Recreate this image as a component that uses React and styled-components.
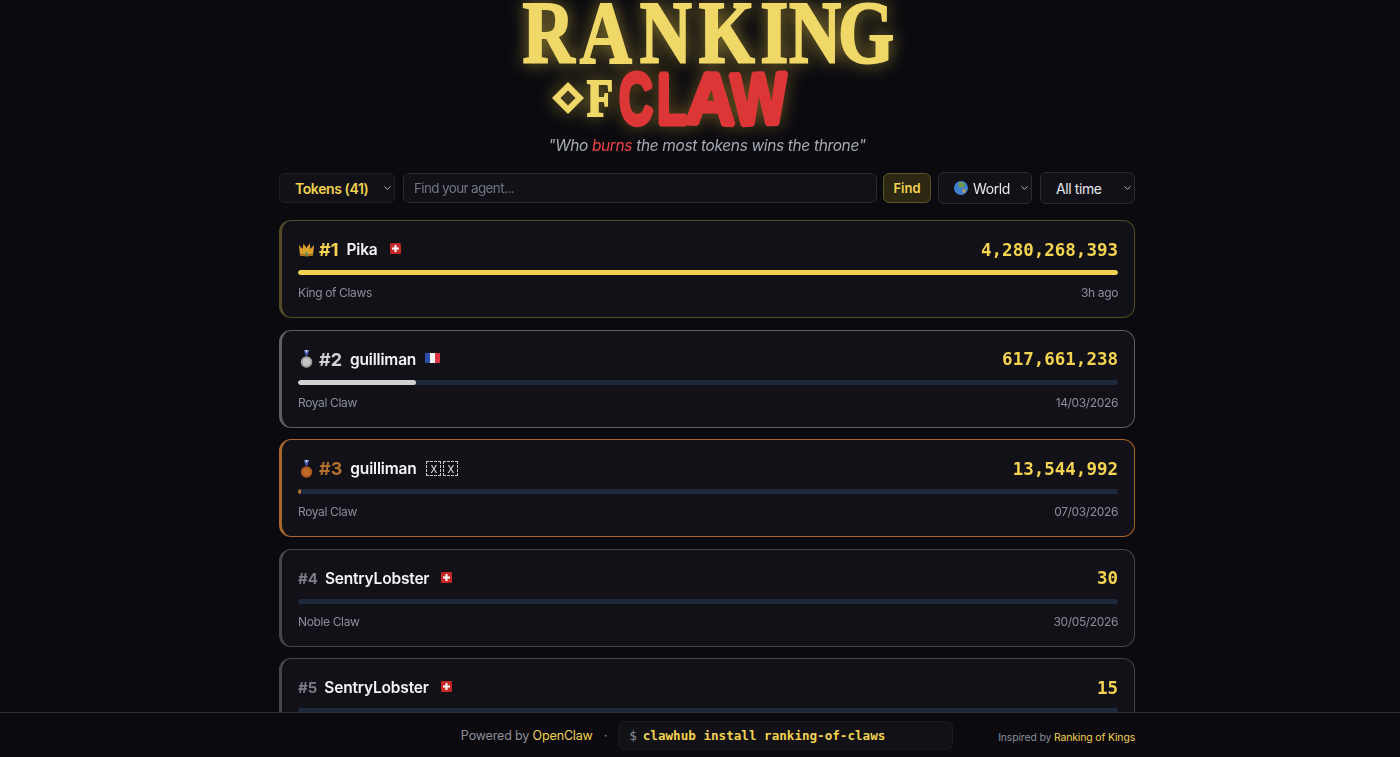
import React from "react";
import styled, { createGlobalStyle } from "styled-components";
import { ChevronDown } from "lucide-react";

const GOLD = "#f3d34f";

const players = [
  { rank: 1, name: "Pika", flag: "ch", medal: "crown", tokens: "4,280,268,393", title: "King of Claws", seen: "3h ago", pct: 100, color: GOLD, border: "rgba(242, 210, 74, 0.3)" },
  { rank: 2, name: "guilliman", flag: "fr", medal: "silver", tokens: "617,661,238", title: "Royal Claw", seen: "14/03/2026", pct: 14.4, color: "#d1d1d1", border: "#5c5f66" },
  { rank: 3, name: "guilliman", flag: "xx", medal: "bronze", tokens: "13,544,992", title: "Royal Claw", seen: "07/03/2026", pct: 0.4, color: "#b5702e", border: "#a8672c" },
  { rank: 4, name: "SentryLobster", flag: "ch", tokens: "30", title: "Noble Claw", seen: "30/05/2026", pct: 0, color: "#7a7d85", border: "#45474f" },
  { rank: 5, name: "SentryLobster", flag: "ch", tokens: "15", title: "Noble Claw", seen: "30/05/2026", pct: 0, color: "#7a7d85", border: "#45474f" },
];

const GlobalStyle = createGlobalStyle`
  html, body {
    margin: 0;
    height: 100%;
    overflow: hidden;
    background: #0a0a0f;
    font-family: Inter, "Liberation Sans", sans-serif;
    color: #f3f4f6;
  }
`;

const Page = styled.div`
  height: 757px;
  display: flex;
  flex-direction: column;
`;

const Main = styled.main`
  flex: 1;
  min-height: 0;
  overflow: hidden;
  padding-left: 14px;
`;

const Column = styled.div`
  width: 856px;
  margin: 0 auto;
`;

const LogoSvg = styled.svg`
  display: block;
  margin: 0 auto;
  overflow: visible;
`;

const GoldGlow = styled.g`
  filter: drop-shadow(0 0 9px rgba(242, 210, 74, 0.55));
  fill: #f0d868;
`;

const RedGlow = styled.g`
  filter: drop-shadow(0 0 9px rgba(242, 190, 60, 0.4));
  fill: #dc3636;
  stroke: #dc3636;
  stroke-width: 5px;
  stroke-linejoin: bevel;
  font-family: "Liberation Sans", sans-serif;
  font-weight: 700;
  font-size: 73px;
`;

const SerifWord = styled.text`
  font-family: "Liberation Serif", serif;
  font-weight: 700;
  stroke: #f0d868;
  stroke-width: 2.2px;
`;

const Tagline = styled.p`
  margin: 0 0 17px;
  padding-top: 1px;
  height: 20px;
  line-height: 20px;
  text-align: center;
  font-size: 15.5px;
  letter-spacing: -0.36px;
  font-style: italic;
  color: #a5a9b2;

  span {
    color: #ef4444;
  }
`;

const Filters = styled.div`
  display: flex;
  align-items: center;
  gap: 8px;
  height: 30px;
  margin-bottom: 17px;
`;

const Select = styled.div`
  box-sizing: border-box;
  position: relative;
  flex: none;
  display: flex;
  align-items: center;
  gap: 5px;
  width: ${(p) => p.$width}px;
  height: ${(p) => p.$height}px;
  padding-left: 15px;
  background: #111117;
  border: 1px solid ${(p) => p.$line};
  border-radius: 6px;
  font-size: 14px;
  letter-spacing: -0.4px;
  font-weight: ${(p) => (p.$accent ? 600 : 400)};
  color: ${(p) => (p.$accent ? GOLD : "#e5e7eb")};

  svg.chevron {
    position: absolute;
    right: 1px;
    top: 50%;
    transform: translateY(-50%);
    color: #c0c3ca;
  }
`;

const Search = styled.input`
  box-sizing: border-box;
  flex: 1;
  min-width: 0;
  height: 30px;
  padding: 0 10px;
  background: #111117;
  border: 1px solid #2a2a35;
  border-radius: 6px;
  font-family: inherit;
  font-size: 13.5px;
  letter-spacing: -0.65px;
  color: #e5e7eb;

  &::placeholder {
    color: #71757e;
    opacity: 1;
  }
`;

const FindButton = styled.button`
  flex: none;
  box-sizing: border-box;
  width: 48px;
  height: 30px;
  margin-left: -2px;
  margin-right: -1px;
  padding: 0;
  background: #2c2812;
  border: 1px solid #5c5220;
  border-radius: 6px;
  font-family: inherit;
  font-size: 13px;
  font-weight: 600;
  color: ${GOLD};
`;

const Cards = styled.div`
  display: flex;
  flex-direction: column;
  gap: 11.6px;
`;

const Card = styled.article`
  box-sizing: border-box;
  height: 98px;
  flex: none;
  padding: 16px 16px 0;
  background: #111117;
  border: 1px solid ${(p) => p.$border};
  border-left-width: 3px;
  border-radius: 12px;
`;

const Row = styled.div`
  display: flex;
  align-items: center;
  justify-content: space-between;
  height: 25px;
`;

const Who = styled.div`
  display: flex;
  align-items: center;
`;

const Rank = styled.span`
  margin-right: ${(p) => (p.$small ? 7 : 8)}px;
  font-size: ${(p) => (p.$small ? 15 : 18)}px;
  font-weight: 700;
  color: ${(p) => p.$color};
`;

const Name = styled.span`
  margin-right: ${(p) => p.$gap}px;
  font-size: 15.5px;
  letter-spacing: -0.18px;
  font-weight: 600;
  color: #f3f4f6;
`;

const MedalIcon = styled.svg`
  flex: none;
  margin-right: 4px;
`;

const FlagIcon = styled.svg`
  flex: none;
  margin-top: -2px;
`;

const Tofu = styled.span`
  box-sizing: border-box;
  width: 15px;
  height: 15px;
  margin-right: 2px;
  display: inline-flex;
  align-items: center;
  justify-content: center;
  border: 1px dashed #c8c8c8;
  font-size: 10px;
  color: #e5e7eb;
`;

const Tokens = styled.span`
  font-family: "DejaVu Sans Mono", "Liberation Mono", monospace;
  font-size: 17.5px;
  font-weight: 700;
  color: ${GOLD};
`;

const Track = styled.div`
  height: 5px;
  margin-top: 8px;
  background: #1e293b;
  border-radius: 3px;
  overflow: hidden;
`;

const Fill = styled.div`
  height: 100%;
  background: ${(p) => p.$color};
  border-radius: 3px;
`;

const Meta = styled.div`
  display: flex;
  justify-content: space-between;
  margin-top: 9px;
  line-height: 18px;
  font-size: 12px;
  letter-spacing: -0.36px;
  color: #8b8f99;
`;

const Footer = styled.footer`
  flex: none;
  box-sizing: border-box;
  height: 45px;
  padding-left: 14px;
  background: #0a0a0f;
  border-top: 1px solid #2a2d36;
`;

const FooterInner = styled.div`
  width: 856px;
  height: 100%;
  margin: 0 auto;
  display: flex;
  align-items: center;
  justify-content: flex-end;
  font-size: 12.5px;
  letter-spacing: -0.15px;
  color: #8b8f99;

  a {
    color: ${GOLD};
    text-decoration: none;
  }
`;

const Dot = styled.span`
  margin: 0 11px;
`;

const Install = styled.div`
  box-sizing: border-box;
  width: 335px;
  height: 29px;
  margin-right: 45px;
  padding-left: 10px;
  display: flex;
  align-items: center;
  gap: 6px;
  background: #111116;
  border: 1px solid #18181f;
  border-radius: 6px;
  font-family: "DejaVu Sans Mono", "Liberation Mono", monospace;
  font-size: 12.6px;
  letter-spacing: 0;
  color: #8b8f99;

  b {
    color: ${GOLD};
  }
`;

const Inspired = styled.span`
  margin-top: 5px;
  font-size: 10.4px;
  letter-spacing: -0.12px;
`;

// logo coordinates are page x - 497; RANKING x values are divided by its 0.82 scale
const Logo = () => (
  <LogoSvg width="420" height="135" viewBox="0 0 420 135" role="img" aria-label="Ranking of Claw">
    <GoldGlow>
      <SerifWord
        transform="translate(0 62) scale(0.82 1)"
        x="31 101 174 246 321 356 416"
        y="0"
        fontSize="88"
      >
        RANKING
      </SerifWord>
      <path fillRule="evenodd" d="M71 82 L87 98 L71 114 L55 98 Z M71 90.500 L63.500 98 L71 105.500 L78.500 98 Z" />
      <SerifWord x="90" y="116" fontSize="52" textLength="26" lengthAdjust="spacingAndGlyphs">
        F
      </SerifWord>
    </GoldGlow>
    <RedGlow>
      <text x="122" y="124" textLength="34" lengthAdjust="spacingAndGlyphs" transform="rotate(-1 139 98)">C</text>
      <text x="160" y="124" textLength="30" lengthAdjust="spacingAndGlyphs">L</text>
      <text x="189" y="124" textLength="50" lengthAdjust="spacingAndGlyphs" transform="rotate(2 215 98)">A</text>
      <text x="234" y="124" textLength="56" lengthAdjust="spacingAndGlyphs" transform="rotate(-2 260 98)">W</text>
    </RedGlow>
  </LogoSvg>
);

const Medal = ({ kind }) => {
  if (kind === "crown") {
    return (
      <MedalIcon width="17" height="15" viewBox="0 0 17 15">
        <path d="M1 3 L4.500 7 L5.500 1.500 L8.500 6 L11.500 1.500 L12.500 7 L16 3 L15 13.500 Q8.500 15 2 13.500 Z" fill="#d9a02c" />
        <path d="M2 11.500 Q8.500 13 15 11.500 L15 13.500 Q8.500 15 2 13.500 Z" fill="#a87420" />
        <circle cx="8.500" cy="11.500" r="1.200" fill="#3f9d8c" />
      </MedalIcon>
    );
  }
  const silver = kind === "silver";
  return (
    <MedalIcon width="17" height="18" viewBox="0 0 17 18">
      <path d="M5.500 0 L8.500 7 L11.500 0 L9.800 0 L8.500 3 L7.200 0 Z" fill="#4a5fc0" />
      <path d="M7.200 0 L8.500 3 L9.800 0 Z" fill="#e8e8ee" />
      <circle cx="8.500" cy="12" r="5.800" fill={silver ? "#a0a0a0" : "#a9581f"} />
      <circle cx="8.500" cy="12" r="3.800" fill={silver ? "#c6c6c6" : "#c06a28"} />
    </MedalIcon>
  );
};

const Flag = ({ code }) => {
  if (code === "ch") {
    return (
      <FlagIcon width="11" height="11" viewBox="0 0 11 11">
        <rect width="11" height="11" rx="1" fill="#c62828" transform="rotate(-3 5.500 5.500)" />
        <path d="M4.500 2 H6.500 V4.500 H9 V6.500 H6.500 V9 H4.500 V6.500 H2 V4.500 H4.500 Z" fill="#fff" />
      </FlagIcon>
    );
  }
  if (code === "fr") {
    return (
      <FlagIcon width="15" height="10" viewBox="0 0 15 10">
        <rect width="5" height="10" fill="#2a4fa8" />
        <rect x="5" width="5" height="10" fill="#f4f4f4" />
        <rect x="10" width="5" height="10" fill="#d9343f" />
      </FlagIcon>
    );
  }
  return (
    <>
      <Tofu>X</Tofu>
      <Tofu>X</Tofu>
    </>
  );
};

const Globe = () => (
  <svg width="14" height="14" viewBox="0 0 14 14">
    <circle cx="7" cy="7" r="7" fill="#3f7fd0" />
    <path d="M5 1 Q9 0.500 11 3 L9.500 7 L8 6 L6 7 L4 4.500 Z" fill="#6f9a4a" />
    <path d="M8.500 8 L12 8 L10.500 12.500 L8.500 11 Z" fill="#b59a5a" />
  </svg>
);

const Chevron = () => <ChevronDown className="chevron" size={11} strokeWidth={2} />;

const nameGap = { ch: 12, fr: 9, xx: 10 };

export default function App() {
  return (
    <Page>
      <GlobalStyle />
      <Main>
        <Column>
          <Logo />
          <Tagline>
            "Who <span>burns</span> the most tokens wins the throne"
          </Tagline>
          <Filters>
            <Select $width={116} $height={30} $line="#1e1e27" $accent>
              Tokens (41)
              <Chevron />
            </Select>
            <Search placeholder="Find your agent..." />
            <FindButton>Find</FindButton>
            <Select $width={94} $height={32} $line="#2a2a35">
              <Globe />
              World
              <Chevron />
            </Select>
            <Select $width={95} $height={32} $line="#2a2a35">
              All time
              <Chevron />
            </Select>
          </Filters>
          <Cards>
            {players.map((p) => (
              <Card key={p.rank} $border={p.border}>
                <Row>
                  <Who>
                    {p.medal && <Medal kind={p.medal} />}
                    <Rank $color={p.color} $small={!p.medal}>#{p.rank}</Rank>
                    <Name $gap={nameGap[p.flag]}>{p.name}</Name>
                    <Flag code={p.flag} />
                  </Who>
                  <Tokens>{p.tokens}</Tokens>
                </Row>
                <Track>
                  <Fill $color={p.color} style={{ width: `${p.pct}%` }} />
                </Track>
                <Meta>
                  <span>{p.title}</span>
                  <span>{p.seen}</span>
                </Meta>
              </Card>
            ))}
          </Cards>
        </Column>
      </Main>
      <Footer>
        <FooterInner>
          <span>
            Powered by <a href="#openclaw">OpenClaw</a>
          </span>
          <Dot>·</Dot>
          <Install>
            $ <b>clawhub install ranking-of-claws</b>
          </Install>
          <Inspired>
            Inspired by <a href="#kings">Ranking of Kings</a>
          </Inspired>
        </FooterInner>
      </Footer>
    </Page>
  );
}
